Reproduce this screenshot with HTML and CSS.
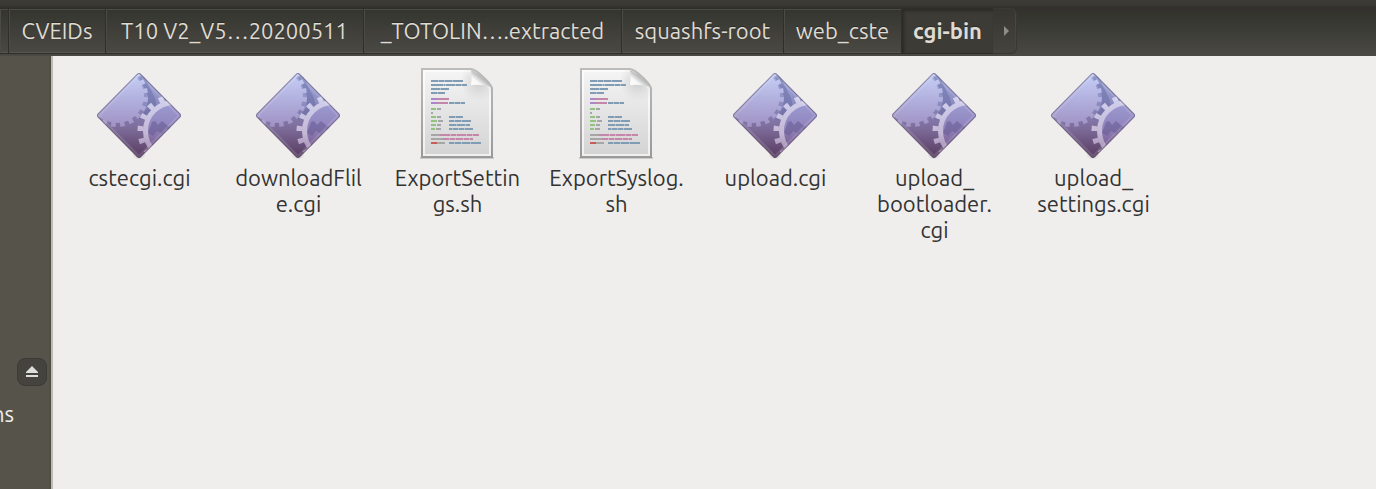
FILE: index.html
```html
<!DOCTYPE html>
<html lang="en">
<head>
<meta charset="utf-8">
<title>cgi-bin</title>
<link rel="stylesheet" href="styles.css">
</head>
<body>
<svg class="defs" width="0" height="0" aria-hidden="true">
  <defs>
    <linearGradient id="base" x1="0" y1="0" x2="0" y2="1"><stop offset="0" stop-color="#a3aedf"/><stop offset=".4" stop-color="#8a88bd"/><stop offset=".65" stop-color="#7c6a98"/><stop offset="1" stop-color="#54375a"/></linearGradient>
    <linearGradient id="gear" gradientUnits="userSpaceOnUse" x1="0" y1="5" x2="0" y2="60"><stop offset="0" stop-color="#c6d0f6"/><stop offset=".5" stop-color="#b1afdd"/><stop offset="1" stop-color="#9f91c2"/></linearGradient>
    <linearGradient id="ring" gradientUnits="userSpaceOnUse" x1="0" y1="28" x2="0" y2="90"><stop offset="0" stop-color="#d0d2ee"/><stop offset=".6" stop-color="#c4b8d6"/><stop offset="1" stop-color="#967ca6"/></linearGradient>
    <linearGradient id="hole" gradientUnits="userSpaceOnUse" x1="0" y1="35" x2="0" y2="85"><stop offset="0" stop-color="#9b9bd0"/><stop offset=".5" stop-color="#9183bd"/><stop offset="1" stop-color="#70507f"/></linearGradient>
    <linearGradient id="paper" x1="0" y1="0" x2="0" y2="1"><stop offset="0" stop-color="#f5f5f5"/><stop offset="1" stop-color="#d3d3d3"/></linearGradient>
    <linearGradient id="edge" x1="0" y1="0" x2="0" y2="1"><stop offset="0" stop-color="#bcbcbc"/><stop offset="1" stop-color="#999"/></linearGradient>
    <linearGradient id="curl" gradientUnits="userSpaceOnUse" x1="57" y1="20" x2="67" y2="8"><stop offset="0" stop-color="#fff"/><stop offset=".6" stop-color="#f8f8f8"/><stop offset="1" stop-color="#b5b5b5"/></linearGradient>
    <radialGradient id="shade" gradientUnits="userSpaceOnUse" cx="66" cy="14" r="20"><stop offset="0" stop-color="#777" stop-opacity=".3"/><stop offset="1" stop-color="#aaa" stop-opacity="0"/></radialGradient>
    <clipPath id="diamond"><path d="M42 6Q44 4 46 6L85 45.500Q87 47.500 85 49.500L46 89Q44 91 42 89L3 49.500Q1 47.500 3 45.500Z"/></clipPath>
  </defs>
  <symbol id="program" viewBox="0 0 89 92">
    <ellipse cx="44" cy="87" rx="6" ry="4" fill="#000" opacity=".06"/>
    <g clip-path="url(#diamond)">
      <path fill="url(#base)" d="M0 4h88v88H0z"/>
      <path d="M44 9L49 7L54 18L60 30L62 38L56 46L50 52L44 51L52 40L53 28Z" fill="#5d6199" opacity=".4"/>
      <circle cx="22" cy="28" r="27" fill="url(#gear)"/>
      <circle cx="22" cy="28" r="28.500" fill="none" stroke="url(#gear)" stroke-width="5" stroke-dasharray="4.500 4.453" stroke-dashoffset="-1.250"/>
      <circle cx="79" cy="63" r="27" fill="url(#hole)"/>
      <path d="M57 54L60 53L63 57L67 53L73 58L79 60L88 57V68L78 64L71 61L67 66L62 63L58 68L53 65Z" fill="#675d92" opacity=".6"/>
      <circle cx="79" cy="63" r="28.500" fill="none" stroke="url(#ring)" stroke-width="5"/>
      <circle cx="79" cy="63" r="33.500" fill="none" stroke="url(#ring)" stroke-width="6" stroke-dasharray="5 7.382" stroke-dashoffset="-6"/>
      <path d="M44 5L86 47.500L44 90L2 47.500Z" fill="none" stroke="#fff" stroke-opacity=".12" stroke-width="5"/>
      <path d="M42 6Q44 4 46 6L85 45.500Q87 47.500 85 49.500L46 89Q44 91 42 89L3 49.500Q1 47.500 3 45.500Z" fill="none" stroke="#574763" stroke-opacity=".5" stroke-width="2"/>
    </g>
  </symbol>
  <symbol id="script" viewBox="0 0 89 92">
    <path d="M7 90h74" stroke="#000" stroke-opacity=".15" stroke-width="2"/>
    <path d="M9 1H58C64 2 77 14 79 20V89H9Z" fill="url(#paper)" stroke="url(#edge)" stroke-width="2"/>
    <path d="M11 87V3H58C64 6 75 15 77 22V87Z" fill="none" stroke="#fff" stroke-opacity=".65" stroke-width="2"/>
    <path d="M47 2H58C64 3 77 14 78 20V34H59Q46 24 50 2Z" fill="url(#shade)"/>
    <path d="M58 2C64 5 74 12 78 19Q70 16 58 17Q59 8 58 2Z" fill="url(#curl)"/>
    <g fill="none" stroke-width="2">
      <path stroke="#819db6" d="M18 13h32M18 17h36M18 21h18M18 25h14M36 35h16M36 49h14M36 53h22M36 57h21M36 61h24M36 75h32"/>
      <path stroke="#ad85ca" d="M18 31h6M18 35h6"/>
      <path stroke="#c487aa" d="M24 31h12M24 35h11M27 67h39M30 71h30"/>
      <path stroke="#93c47f" d="M18 41h5M18 49h5M18 53h6M18 57h5M18 61h4"/>
      <path stroke="#a6a6a6" d="M24 41h4M18 45h2M24 49h4M25 53h5M24 57h4M23 61h5M18 67h9M18 71h12M24 75h8"/>
      <path stroke="#c85c58" d="M18 75h6"/>
      <path stroke="#e8e8e8" stroke-opacity=".45" d="M25 13h1M31 13h1M39 13h1M30 17h1M32 17h1M42 17h1M48 17h1M27 21h1M24 25h1M41 35h1M47 35h1M42 49h1M41 53h1M48 53h1M43 57h1M52 57h1M39 61h1M45 61h1M51 61h1M37 67h1M43 67h1M53 67h1M59 67h1M36 71h1M42 71h1M50 71h1M56 71h1M41 75h1M48 75h1M57 75h1"/>
    </g>
  </symbol>
</svg>
<div class="window">
  <header class="toolbar">
    <nav class="path-bar" aria-label="Path">
      <button class="crumb crumb-cut" aria-label="Previous folder"></button>
      <button class="crumb crumb-short">CVEIDs</button>
      <button class="crumb crumb-long">T10 V2_V5…20200511</button>
      <button class="crumb crumb-long">_TOTOLIN….extracted</button>
      <button class="crumb crumb-medium">squashfs-root</button>
      <button class="crumb crumb-web">web_cste</button>
      <button class="crumb crumb-active" aria-current="page">cgi-bin</button>
      <button class="crumb crumb-next" aria-label="Next folder"><svg width="6" height="10" viewBox="0 0 6 10"><path d="M0 0L5 5L0 10Z" fill="#8f8e86"/></svg></button>
    </nav>
  </header>
  <div class="content">
    <aside class="sidebar">
      <button class="eject" aria-label="Eject"><svg width="14" height="12" viewBox="0 0 14 12"><path d="M7 0L13 6V7H1V6ZM1 9h12v2H1z" fill="#dededc"/></svg></button>
      <a class="place" href="#">ns</a>
    </aside>
    <main class="files">
      <a class="file" href="#"><svg class="icon"><use href="#program"/></svg><span>cstecgi.cgi</span></a>
      <a class="file" href="#"><svg class="icon"><use href="#program"/></svg><span>downloadFlil<br>e.cgi</span></a>
      <a class="file" href="#"><svg class="icon"><use href="#script"/></svg><span>ExportSettin<br>gs.sh</span></a>
      <a class="file" href="#"><svg class="icon"><use href="#script"/></svg><span>ExportSyslog.<br>sh</span></a>
      <a class="file" href="#"><svg class="icon"><use href="#program"/></svg><span>upload.cgi</span></a>
      <a class="file" href="#"><svg class="icon"><use href="#program"/></svg><span>upload_<br>bootloader.<br>cgi</span></a>
      <a class="file" href="#"><svg class="icon"><use href="#program"/></svg><span>upload_<br>settings.cgi</span></a>
    </main>
  </div>
</div>
</body>
</html>
```
FILE: styles.css
```css
* { box-sizing: border-box; }
body {
  margin: 0;
  font-family: Ubuntu, "Noto Sans", sans-serif;
  font-size: 22px;
  line-height: 26px;
  color: #333;
}
.defs { position: absolute; }
.window { display: flex; flex-direction: column; min-height: 100vh; }
.toolbar {
  padding: 8px 0 2px;
  background: linear-gradient(#3c3b37, #3a3934 5px, #32312d 7px, #34342f 14px, #4a4943);
}
.path-bar { display: flex; }
.crumb {
  flex: none;
  display: flex;
  align-items: center;
  justify-content: center;
  height: 46px;
  padding: 0;
  border: solid #2f2e2a;
  border-width: 1px 1px 1px 0;
  background: linear-gradient(#353530, #4a4943);
  box-shadow: inset 1px 1px #4b4a44, inset 0 -1px #57564f;
  color: #dfdbd2;
  font: inherit;
  text-shadow: 0 -1px #2b2a27;
  white-space: nowrap;
}
.crumb-cut { width: 9px; }
.crumb-short { width: 97px; }
.crumb-long { width: 258px; }
.crumb-medium { width: 162px; }
.crumb-web { width: 118px; }
.crumb-active {
  width: 91px;
  border-right: 0;
  background: #3c3b36;
  box-shadow: inset 2px 2px 3px #2c2b27;
  font-weight: bold;
}
.crumb-next {
  width: 24px;
  padding-left: 4px;
  border-color: #393832;
  border-radius: 0 6px 6px 0;
  background: linear-gradient(#363530, #45443e);
  box-shadow: inset -1px 0 #47463f;
}
.content { flex: 1; display: flex; }
.sidebar {
  flex: none;
  display: flex;
  flex-direction: column;
  align-items: flex-end;
  gap: 15px;
  width: 53px;
  padding-top: 302px;
  border-right: 2px solid #bdbbb8;
  background: linear-gradient(90deg, #56534a 48px, #4f4c44);
}
.eject {
  display: flex;
  align-items: center;
  justify-content: center;
  width: 30px;
  height: 28px;
  margin-right: 4px;
  padding: 0;
  border: 1px solid #3d3b36;
  border-radius: 8px;
  background: #45433d;
}
.place {
  align-self: flex-start;
  margin-left: -8px;
  color: #eeeeec;
  text-decoration: none;
}
.files {
  flex: 1;
  display: flex;
  flex-wrap: wrap;
  align-content: flex-start;
  padding: 12px 7px;
  background: #f0eeec;
}
.file {
  display: flex;
  flex-direction: column;
  align-items: center;
  gap: 5px;
  width: 159px;
  color: #333;
  text-align: center;
  text-decoration: none;
}
.icon { width: 89px; height: 92px; }
```
